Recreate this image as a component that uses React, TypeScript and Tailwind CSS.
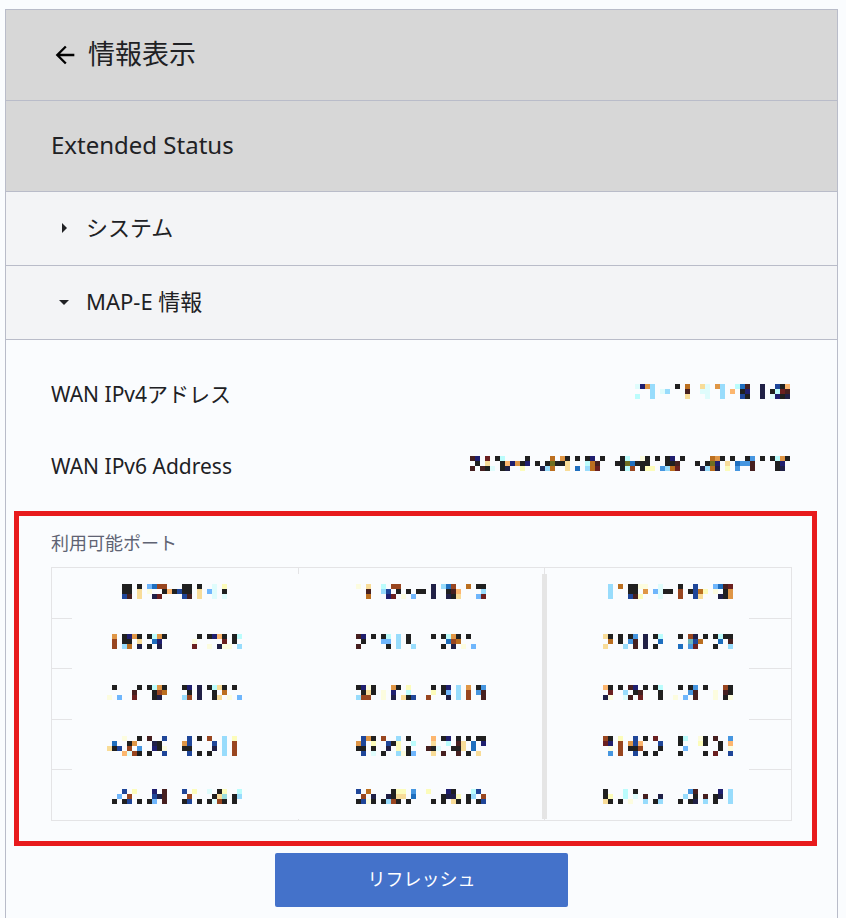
import React from "react";

const PALETTE: Record<string, string> = {
  K: "#202020",
  N: "#1f1f6f",
  d: "#202046",
  M: "#462020",
  R: "#6b2020",
  B: "#1f4699",
  b: "#1f6fbf",
  s: "#4696e0",
  l: "#6fb6fc",
  c: "#98dcfc",
  a: "#bbfcfc",
  p: "#dffcfc",
  e: "#98dcdc",
  E: "#6fb6bb",
  y: "#fcfcbb",
  w: "#fcfcdf",
  t: "#f8dc98",
  o: "#fcb66f",
  O: "#df9646",
  D: "#bb6f20",
  W: "#994620",
  g: "#6f6f20",
};

// One string per line of blocks, "." is empty
const WAN_IPV4 = [
  "pNOc....K.D..tp.Oc..abM..d..BKo",
  "...c.pc...M..pp..c.o.KN..d.KaRM",
  "a..c......t...p..c...BK..d.pNKd",
];

const WAN_IPV6 = [
  "MN.R.Ka....K....D.OK.K.KN.K...Ka..wK.K.KN.K.....DOK.K..Ks.K.KaOK",
  ".K.t..KoNOKN.K.KgKKt...aDM...KKgbKKK...KKM...K.KgN.t.bssM....KN.",
  "M.MKp.Kd..y...dcD..t.b.cDR....KaW.Kyy.scDR....dcDd.y.s..M....Kd.",
];

const PORTS = [
  [
    [
      "...KK.K.lbWW...KK.K..p.y...",
      "...KK.t.w..KoKBKK.t.lp.K...",
      "...BM.t..dR....BM.t..p.p...",
    ],
    [
      "w.t..a.WW......d.cbW..D.KK",
      "..M..cB.K.K.KK.d..KMo....c",
      "..D...NR.w.l...d..dKt...lR",
    ],
    [
      ".c.D.KKww..p...K..B...lbMR",
      ".c...KK.O.lpKK.W.KBDy.w.KO",
      ".c...BMy...p...W..Bt...dKO",
    ],
  ],
  [
    [
      ".O.KNOK.KaOK......K.KNoK.Ka",
      ".W.KK.t..bN......w.....R.K.",
      ".W.cD.d.K.d......R..w.dww.c",
    ],
    [
      "MN.K.Ka.c.K....K.KaOK.K...",
      ".K...ll.c.K.......bWD.....",
      "M.....K.c..c.....K.d.w.l..",
    ],
    [
      "tK.K.Ks.d.Ka...K.Wd.K.KaKK",
      ".D.K.sM.d..b.....EBD...b.M",
      "t...c.M.d.K....b.sR...K..c",
    ],
  ],
  [
    [
      ".K....K.KaOK...KN.d.KatK.K.",
      ".....M...KWD....K.d..K.D...",
      "w.l..R...Kd....cW.d..Kt.w.l",
    ],
    [
      "KNwK...OK.y....K.KN.c.O.Ks",
      ".KtK.w.N..a....y.Kl.c.W.sM",
      "cWW..w.d.tKB..W...d.c.W..M",
    ],
    [
      "oK.K.MN.K.Ka...K.Ks.K...WK",
      ".R..c.KM...K.....sM...w.MK",
      "dw..pM.R...K..w.l.M...w.Kw",
    ],
  ],
  [
    [
      "...w..K.M..B....B.K.W..c.y.",
      ".b..KO...dK....OB....B.c.W.",
      "tKB.W.s..NKw...KK....d.c.W.",
      "...opWK.K..B....B.K.K..c.W.",
    ],
    [
      ".BOK.W..c.K....o.KN.K.K.KK",
      "OB.y..BKy..a...t..a.Mt.b.N",
      "KK.K..d.y.K...MKp..KKt.b..",
      ".B.p.K..cwKl...t.M..M.K.t.",
    ],
    [
      "WK.y..B.K.R....Ka..wK.M..s",
      "RN.W.OBo...B...K...yK..K.o",
      ".w.W.KKW...K....l......K.w",
      ".s.W..B.K.K....K....K.R..B",
    ],
  ],
  [
    [
      "...B.y...N.M...B.y..p.Ky..a",
      "..l.W....BdM....W....Kte.Kc",
      ".K.KB.K.Kl.M...KB.K.KpWK.K.",
    ],
    [
      "B.D....Kyy.s..y...NK...aB.",
      ".W.d..dKtt.b.....Kddy.Kc.W",
      "KBwK.KcWK.K....K.K.tK.K.KB",
    ],
    [
      "K...a.K..........sM....N.c",
      "Ky..a.p.M..d....c.K.M.Kd.c",
      "tK.K.w..c.Kc...K.Kd.c.K..c",
    ],
  ],
];

const BLOCK = 5;

const Mosaic: React.FC<{ rows: string[] }> = ({ rows }) => (
  <svg
    width={rows[0].length * BLOCK}
    height={rows.length * BLOCK}
    shapeRendering="crispEdges"
    role="img"
    aria-label="非公開"
    className="block"
  >
    {rows.map((row, y) =>
      row.split("").map((key, x) =>
        key === "." ? null : (
          <rect
            key={`${x}-${y}`}
            x={x * BLOCK}
            y={y * BLOCK}
            width={BLOCK}
            height={BLOCK}
            fill={PALETTE[key]}
          />
        )
      )
    )}
  </svg>
);

const Icon: React.FC<{ d: string; className: string }> = ({ d, className }) => (
  <svg viewBox="0 0 24 24" fill="currentColor" className={className} aria-hidden="true">
    <path d={d} />
  </svg>
);

const SectionToggle: React.FC<{ label: string; open: boolean }> = ({ label, open }) => (
  <button
    type="button"
    aria-expanded={open}
    className="flex w-full h-[74px] items-center gap-[10px] border-b border-[#b9bcc9] bg-[#f3f4f6] px-[46px] pb-[2px] text-left text-[22px] leading-8"
  >
    <Icon d={open ? "M7 10l5 5 5-5z" : "M10 17l5-5-5-5v10z"} className="w-6 h-6" />
    <span className="pb-[2px]">{label}</span>
  </button>
);

const InfoRow: React.FC<{ label: string; rows: string[] }> = ({ label, rows }) => (
  <div className="flex h-[72px] items-center justify-between">
    <dt className="text-[21px] leading-8">{label}</dt>
    <dd className="pb-[5px]">
      <Mosaic rows={rows} />
    </dd>
  </div>
);

const PortTable: React.FC = () => (
  <div className="relative">
    <table
      aria-labelledby="ports-title"
      className="w-full h-[254px] table-fixed border-collapse border border-[#e4e4e6]"
    >
      <tbody>
        {PORTS.map((row, i) => (
          <tr key={i} className="h-[50px]">
            {row.map((rows, j) => (
              <td
                key={j}
                className={`border border-[#e4e4e6] p-0 ${i < 3 ? "pb-[3px]" : "pt-[2px]"}`}
              >
                <div className="relative z-10 flex justify-center">
                  <Mosaic rows={rows} />
                </div>
              </td>
            ))}
          </tr>
        ))}
      </tbody>
    </table>
    {/* Patches that cover the inner grid lines */}
    <div className="absolute top-[7px] bottom-[2px] left-[21px] right-[43px] grid grid-cols-[7fr_3fr] gap-[5px] bg-[#e5e5e5]">
      <div className="bg-[#fafcfe]" />
      <div className="bg-[#fafcfe]" />
    </div>
  </div>
);

export default function App() {
  return (
    <div className="min-h-screen bg-[#fafcfe] pt-[9px] pl-[5px] pr-2 font-['Noto_Sans','Noto_Sans_CJK_JP',sans-serif] text-[#202124]">
      <main className="border-x border-t border-[#b9bcc9] pb-[11px]">
        <header className="flex h-[91px] items-center gap-[9px] border-b border-[#b9bcc9] bg-[#d7d7d7] px-[45px]">
          <button type="button" aria-label="戻る">
            <Icon
              d="M20 11H7.83l5.59-5.59L12 4l-8 8 8 8 1.41-1.41L7.83 13H20v-2z"
              className="w-7 h-7 text-black"
            />
          </button>
          <h1 className="pb-[2px] text-[27px] leading-9">情報表示</h1>
        </header>
        <h2 className="flex h-[91px] items-center border-b border-[#b9bcc9] bg-[#d7d7d7] px-[45px] pb-[2px] text-[24px] leading-9">
          Extended Status
        </h2>
        <SectionToggle label="システム" open={false} />
        <SectionToggle label="MAP-E 情報" open />

        <dl className="pt-[18px] pr-[47px] pb-[9px] pl-[45px]">
          <InfoRow label="WAN IPv4アドレス" rows={WAN_IPV4} />
          <InfoRow label="WAN IPv6 Address" rows={WAN_IPV6} />
        </dl>

        <section className="ml-2 mr-5 border-[5px] border-[#e81b1d] pt-[15px] pr-5 pb-5 pl-8">
          <h3 id="ports-title" className="mb-3 text-[18px] leading-6 text-[#5f6373]">
            利用可能ポート
          </h3>
          <PortTable />
        </section>

        <div className="mt-[7px] flex justify-center">
          <button
            type="button"
            className="h-[54px] w-[293px] rounded-[2px] bg-[#4472ca] pb-[2px] text-[18px] leading-6 text-white"
          >
            リフレッシュ
          </button>
        </div>
      </main>
    </div>
  );
}
